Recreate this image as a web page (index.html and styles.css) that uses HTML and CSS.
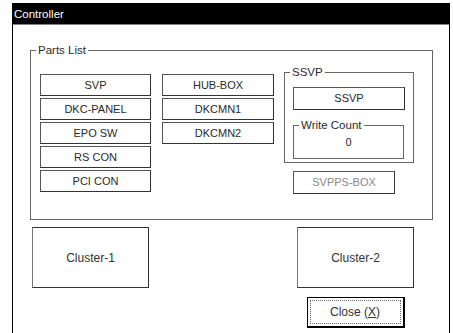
FILE: index.html
```html
<!DOCTYPE html>
<html lang="en">
<head>
    <meta charset="UTF-8">
    <title>Controller</title>
    <link rel="stylesheet" href="styles.css">
</head>
<body>
<div id="window">
    <div id="title">Controller</div>
    <div id="body">
        <div class="group" id="parts">
            <span class="label">Parts List</span>
            <div class="col col1">
                <div class="btn">SVP</div>
                <div class="btn">DKC-PANEL</div>
                <div class="btn">EPO SW</div>
                <div class="btn">RS CON</div>
                <div class="btn">PCI CON</div>
            </div>
            <div class="col col2">
                <div class="btn">HUB-BOX</div>
                <div class="btn">DKCMN1</div>
                <div class="btn">DKCMN2</div>
            </div>
            <div class="col col3">
                <div class="group" id="ssvp">
                    <span class="label">SSVP</span>
                    <div class="btn ssvp-btn">SSVP</div>
                    <div class="group" id="count">
                        <span class="label">Write Count</span>
                        <div class="value">0</div>
                    </div>
                </div>
                <div class="btn disabled" id="svpps">SVPPS-BOX</div>
            </div>
        </div>
        <div id="clusters">
            <div class="cluster">Cluster-1</div>
            <div id="right">
                <div class="cluster">Cluster-2</div>
                <div id="close"><span>Close (<u>X</u>)</span></div>
            </div>
        </div>
    </div>
</div>
</body>
</html>
```

FILE: styles.css
```css
* {
    padding: 0;
    margin: 0;
    box-sizing: border-box;
}

body {
    background: #fff;
    font-family: "Liberation Sans", Arial, sans-serif;
    font-size: 11px;
    color: #2a2a2a;
    overflow: hidden;
}

#window {
    width: 438px;
    height: 340px;
    margin: 3px 0 0 12px;
    border: 1px solid #000;
}

#title {
    height: 21px;
    background: #000;
    color: #fff;
    font-size: 11.5px;
    line-height: 20px;
    padding-left: 1px;
    border-bottom: 1px solid #808080;
}

#body {
    padding: 25px 0 0 17px;
}

.group {
    position: relative;
    border: 1px solid #666;
}

.group .label {
    position: absolute;
    top: -8px;
    left: 5px;
    background: #fff;
    padding: 0 2px;
    line-height: 14px;
    font-size: 11.5px;
}

#parts {
    width: 403px;
    display: flex;
    align-items: flex-start;
    padding: 23px 0 25px 9px;
}

.col {
    display: flex;
    flex-direction: column;
    gap: 2px;
}

.col1 {
    width: 111px;
}

.col2 {
    width: 112px;
    margin-left: 11px;
}

.col3 {
    width: 130px;
    margin-left: 10px;
    margin-top: -2px;
    gap: 0;
}

.btn {
    height: 22px;
    border: 1px solid #555;
    border-right-color: #333;
    border-bottom-color: #333;
    text-align: center;
    line-height: 20px;
}

#ssvp {
    padding: 14px 8px 3px 8px;
}

.ssvp-btn {
    height: 23px;
    line-height: 21px;
}

#count {
    margin-top: 15px;
    width: 111px;
    height: 34px;
    text-align: center;
    line-height: 32px;
}

#svpps {
    width: 102px;
    height: 23px;
    margin: 8px 0 0 9px;
}

.disabled {
    color: #8a8a8a;
}

#clusters {
    display: flex;
    justify-content: space-between;
    align-items: flex-start;
    margin-top: 7px;
    padding: 0 35px 0 2px;
}

.cluster {
    width: 117px;
    height: 61px;
    border: 1px solid #333;
    border-left-color: #777;
    display: flex;
    align-items: center;
    justify-content: center;
    font-size: 12px;
    color: #333;
}

#right {
    display: flex;
    flex-direction: column;
    align-items: center;
}

#close {
    width: 98px;
    height: 31px;
    margin-top: 9px;
    border: 1px solid #000;
    border-right-width: 2px;
    border-bottom-width: 2px;
    padding: 2px;
    font-size: 12px;
    color: #333;
}

#close span {
    display: flex;
    height: 100%;
    align-items: center;
    justify-content: center;
    border: 1px dotted #666;
}
```
